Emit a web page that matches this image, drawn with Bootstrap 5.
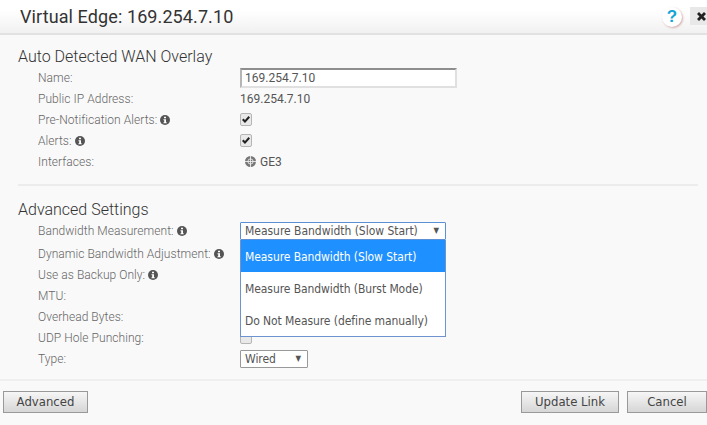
<!DOCTYPE html>
<html lang="en">
<head>
<meta charset="utf-8">
<title>Virtual Edge</title>
<link href="https://cdn.jsdelivr.net/npm/bootstrap@5.3.0/dist/css/bootstrap.min.css" rel="stylesheet">
<style>
html,body{height:100%;}
body{background:#f9f9f9;font-family:Roboto,sans-serif;font-weight:300;font-size:12px;color:#666;overflow:hidden;width:707px;height:425px;}
.dlg-head{height:35px;background:linear-gradient(#fff 0,#fff 10px,#f1f1f1 100%);border-bottom:2px solid #e2e2e2;padding-left:20px;}
.dlg-title{font-size:18px;font-weight:400;color:#333;line-height:1;margin:0;letter-spacing:.1px;}
.help-dot{width:20px;height:20px;border-radius:50%;background:#fff;box-shadow:1px 1px 2px rgba(190,110,110,.55);color:#12a5d6;font:700 17px/20px "Liberation Sans",sans-serif;text-align:center;}
.close-box{width:17px;height:18px;background:#e8e8e8;display:flex;align-items:center;padding-left:6px;margin-left:8px;margin-bottom:1px;}
.sect{padding-left:18px;}
.sect-title{font-size:16px;font-weight:300;color:#333;line-height:20px;margin:0;}
.frow{display:flex;align-items:center;height:21px;padding-left:20px;}
.frow-first{margin-bottom:2px;}
.flabel{width:202px;flex:none;display:flex;align-items:center;gap:3px;letter-spacing:.05px;}
.fval{font-weight:400;color:#555;}
.txt-in{width:217px;height:20px;border:2px solid #e0e0e0;border-top-color:#8e8e8e;border-left-color:#b5b5b5;background:#fff;padding:0 3px;font:400 12px Roboto,sans-serif;color:#555;outline:0;}
.chk{width:12px;height:13px;border:1px solid #b5b5b5;border-radius:2px;background:#e9e9e9;display:flex;align-items:center;justify-content:center;}
.sel-box{position:relative;display:flex;align-items:center;justify-content:space-between;height:18px;background:#fff;border:1px solid #999;border-radius:1px;padding:0 6px 0 4px;font:400 12px "DejaVu Sans Condensed",sans-serif;color:#555;letter-spacing:-.03px;}
.arrow{font-size:8px;color:#555;}
.open-sel{width:206px;border-color:#5b8fd6;}
.drop-wrap{position:relative;}
.drop-menu{position:absolute;left:0;top:18px;width:206px;background:#fff;border:1px solid #6f93cf;border-top:0;z-index:5;font:400 12px "DejaVu Sans Condensed",sans-serif;color:#555;letter-spacing:-.08px;}
.drop-item{height:32px;line-height:34px;padding-left:4px;white-space:nowrap;}
.drop-on{background:#1e90ff;color:#fff;}
.sep{border-top:2px solid #ececec;margin:0 9px 0 18px;opacity:1;}
.foot{border-top:2px solid #efefef;padding:10px 0 0 3px;margin-top:10px;}
.act-btn{height:22px;background:linear-gradient(#f6f6f6,#d6d6d6);border:1px solid #999;border-radius:0;font:400 13px "DejaVu Sans Condensed",sans-serif;color:#444;padding:0;line-height:18px;}
</style>
</head>
<body>
<header class="dlg-head d-flex align-items-center justify-content-between">
  <h1 class="dlg-title">Virtual Edge: 169.254.7.10</h1>
  <div class="d-flex align-items-center">
    <div class="help-dot">?</div>
    <div class="close-box"><svg width="11" height="11" viewBox="0 0 11 11"><path d="M1 3 3 1l2.500 2.500L8 1l2 2-2.500 2.500L10 8 8 10 5.500 7.500 3 10 1 8l2.500-2.500z" fill="#222"/></svg></div>
  </div>
</header>
<main>
  <section class="sect" style="padding-top:12px">
    <h2 class="sect-title">Auto Detected WAN Overlay</h2>
    <div class="frow"><span class="flabel">Name:</span><input class="txt-in" value="169.254.7.10"></div>
    <div class="frow"><span class="flabel">Public IP Address:</span><span class="fval">169.254.7.10</span></div>
    <div class="frow"><span class="flabel">Pre-Notification Alerts: <svg width="10" height="10" viewBox="0 0 10 10"><circle cx="5" cy="5" r="5" fill="#555"/><path d="M4 1.800h2v1.500H4zM3.500 4.200h2.500v3h.7v1H3.500v-1h.7v-2h-.7z" fill="#fff"/></svg></span><span class="chk"><svg width="10" height="9" viewBox="0 0 10 9"><path d="M1 5l1.500-1.500L4 5l3.500-4L9 2.500 4 8z" fill="#222"/></svg></span></div>
    <div class="frow"><span class="flabel">Alerts: <svg width="10" height="10" viewBox="0 0 10 10"><circle cx="5" cy="5" r="5" fill="#555"/><path d="M4 1.800h2v1.500H4zM3.500 4.200h2.500v3h.7v1H3.500v-1h.7v-2h-.7z" fill="#fff"/></svg></span><span class="chk"><svg width="10" height="9" viewBox="0 0 10 9"><path d="M1 5l1.500-1.500L4 5l3.500-4L9 2.500 4 8z" fill="#222"/></svg></span></div>
    <div class="frow"><span class="flabel">Interfaces:</span><span class="fval d-flex align-items-center gap-1" style="padding-left:5px"><svg width="11" height="11" viewBox="0 0 11 11"><circle cx="5.500" cy="5.500" r="5.500" fill="#777"/><path d="M5.500 0v11M0 5.500h11" stroke="#f9f9f9" stroke-width=".8"/><circle cx="5.500" cy="5.500" r="2.600" fill="none" stroke="#f9f9f9" stroke-width=".8"/></svg>GE3</span></div>
  </section>
  <hr class="sep" style="margin-top:12px;margin-bottom:14px">
  <section class="sect">
    <h2 class="sect-title">Advanced Settings</h2>
    <div class="frow frow-first"><span class="flabel">Bandwidth Measurement: <svg width="10" height="10" viewBox="0 0 10 10"><circle cx="5" cy="5" r="5" fill="#555"/><path d="M4 1.800h2v1.500H4zM3.500 4.200h2.500v3h.7v1H3.500v-1h.7v-2h-.7z" fill="#fff"/></svg></span>
      <div class="drop-wrap">
        <div class="sel-box open-sel"><span>Measure Bandwidth (Slow Start)</span><span class="arrow">▼</span></div>
        <div class="drop-menu">
          <div class="drop-item drop-on">Measure Bandwidth (Slow Start)</div>
          <div class="drop-item">Measure Bandwidth (Burst Mode)</div>
          <div class="drop-item">Do Not Measure (define manually)</div>
        </div>
      </div>
    </div>
    <div class="frow"><span class="flabel">Dynamic Bandwidth Adjustment: <svg width="10" height="10" viewBox="0 0 10 10"><circle cx="5" cy="5" r="5" fill="#555"/><path d="M4 1.800h2v1.500H4zM3.500 4.200h2.500v3h.7v1H3.500v-1h.7v-2h-.7z" fill="#fff"/></svg></span></div>
    <div class="frow"><span class="flabel">Use as Backup Only: <svg width="10" height="10" viewBox="0 0 10 10"><circle cx="5" cy="5" r="5" fill="#555"/><path d="M4 1.800h2v1.500H4zM3.500 4.200h2.500v3h.7v1H3.500v-1h.7v-2h-.7z" fill="#fff"/></svg></span></div>
    <div class="frow"><span class="flabel">MTU:</span></div>
    <div class="frow"><span class="flabel">Overhead Bytes:</span></div>
    <div class="frow"><span class="flabel">UDP Hole Punching:</span><span class="chk"></span></div>
    <div class="frow"><span class="flabel">Type:</span><div class="sel-box" style="width:68px"><span>Wired</span><span class="arrow">▼</span></div></div>
  </section>
  <footer class="foot d-flex justify-content-between">
    <button type="button" class="btn act-btn" style="width:85px">Advanced</button>
    <div class="d-flex gap-2">
      <button type="button" class="btn act-btn" style="width:98px">Update Link</button>
      <button type="button" class="btn act-btn" style="width:80px">Cancel</button>
    </div>
  </footer>
</main>
<script src="https://cdn.jsdelivr.net/npm/bootstrap@5.3.0/dist/js/bootstrap.bundle.min.js"></script>
</body>
</html>
